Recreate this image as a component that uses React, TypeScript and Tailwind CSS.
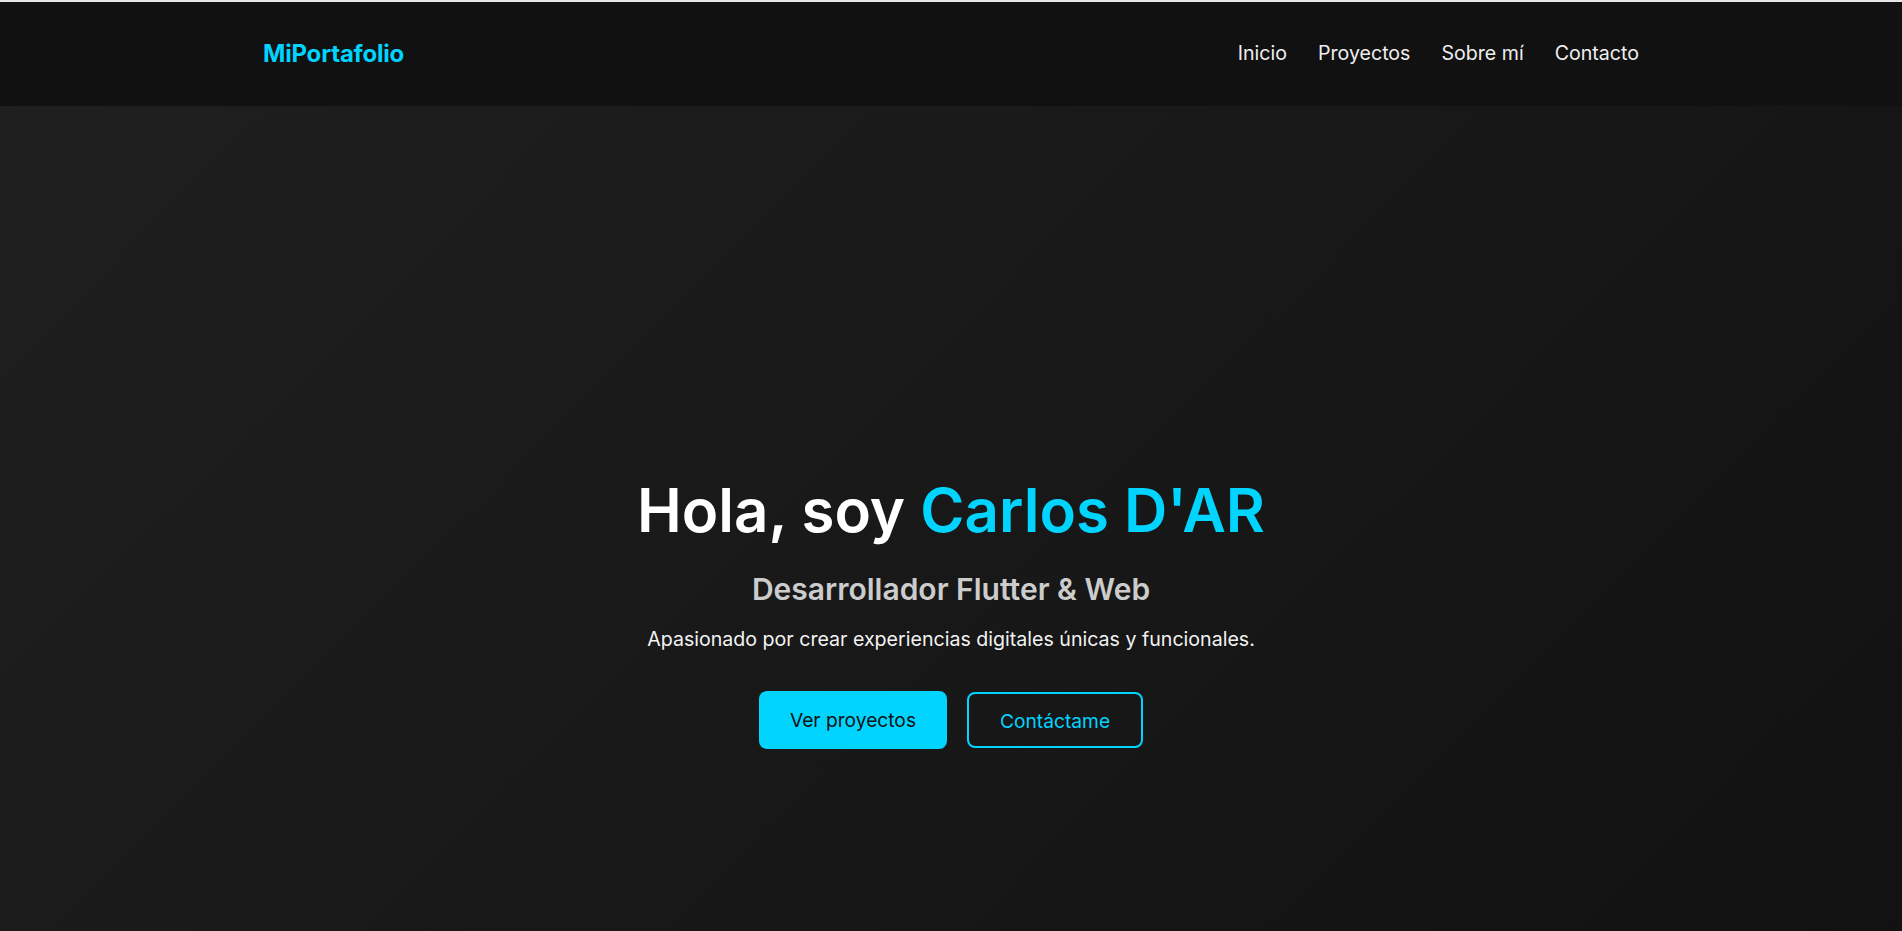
import React from "react";

const links = ["Inicio", "Proyectos", "Sobre mí", "Contacto"];

function Header() {
  return (
    <header className="border-t-2 border-[#e6e6e6] bg-[#111111]">
      <div className="mx-auto flex h-[104px] max-w-[1376px] items-center justify-between">
        <a href="#" className="text-[24px] font-bold tracking-[-0.2px] text-[#00d4ff]">
          MiPortafolio
        </a>
        <nav className="flex items-center gap-[31px]">
          {links.map((l) => (
            <a key={l} href="#" className="text-[19.6px] text-[#eeeeee]">
              {l}
            </a>
          ))}
        </nav>
      </div>
    </header>
  );
}

function Hero() {
  return (
    <section className="flex min-h-screen flex-col items-center justify-center bg-[linear-gradient(135deg,#1f1f1f,#111111)] pt-20 text-center">
      <h1 className="text-[60px] font-semibold leading-[72px] text-white">
        Hola, soy <span className="text-[#00d4ff]">Carlos D'AR</span>
      </h1>
      <h2 className="mt-[25px] text-[30px] font-semibold leading-[36px] text-[#cccccc]">
        Desarrollador Flutter &amp; Web
      </h2>
      <p className="mt-[18px] text-[19.6px] leading-[29px] text-[#f2f2f2]">
        Apasionado por crear experiencias digitales únicas y funcionales.
      </p>
      <div className="mt-[37px] flex items-center gap-5">
        <a
          href="#"
          className="flex h-[58px] items-center rounded-lg bg-[#00d4ff] px-[31px] text-[19.2px] text-[#111111]"
        >
          Ver proyectos
        </a>
        <a
          href="#"
          className="flex h-[56px] items-center rounded-lg border-2 border-[#00d4ff] px-[31px] pt-[2px] text-[19.2px] text-[#00d4ff]"
        >
          Contáctame
        </a>
      </div>
    </section>
  );
}

export default function App() {
  return (
    <div className="min-h-screen bg-[#111111] font-['Inter',sans-serif]">
      <Header />
      <Hero />
    </div>
  );
}
